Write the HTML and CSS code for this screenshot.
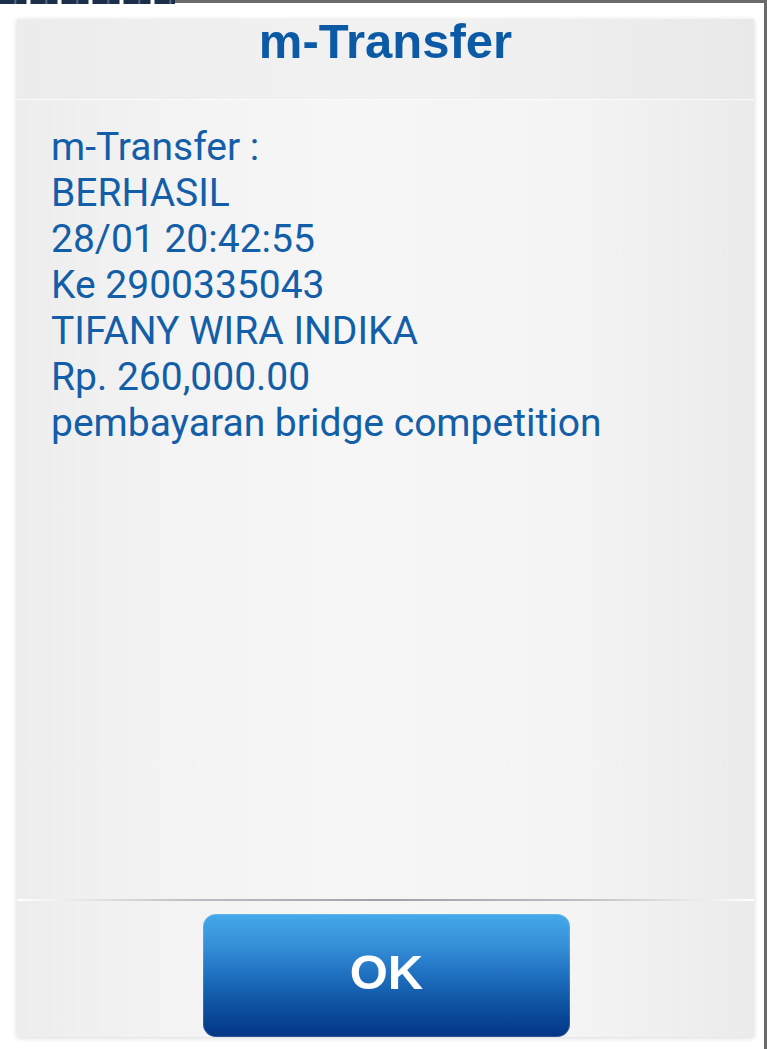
FILE: index.html
```html
<!DOCTYPE html>
<html lang="id">
<head>
<meta charset="utf-8">
<title>m-Transfer</title>
<link rel="stylesheet" href="styles.css">
</head>
<body>
<div class="screen">
  <div class="topstrip">
    <div class="topstrip-dark"></div>
    <div class="topstrip-bar"></div>
  </div>
  <div class="dialog">
    <div class="dialog-header">
      <h1 class="dialog-title">m-Transfer</h1>
    </div>
    <div class="dialog-body">
      <p class="line">m-Transfer :</p>
      <p class="line">BERHASIL</p>
      <p class="line">28/01 20:42:55</p>
      <p class="line">Ke 2900335043</p>
      <p class="line">TIFANY WIRA INDIKA</p>
      <p class="line">Rp. 260,000.00</p>
      <p class="line">pembayaran bridge competition</p>
    </div>
    <div class="dialog-divider"></div>
    <div class="dialog-footer">
      <button class="ok-button" type="button">OK</button>
    </div>
  </div>
</div>
</body>
</html>
```

FILE: styles.css
```css
html, body {
  margin: 0;
  padding: 0;
  background: #ffffff;
}

.screen {
  width: 764px;
  height: 1049px;
  border-right: 3px solid #6a6a6a;
  display: flex;
  flex-direction: column;
  overflow: hidden;
}

.topstrip {
  height: 4px;
  display: flex;
  flex: none;
  overflow: hidden;
}

.topstrip-dark {
  width: 175px;
  height: 4px;
  flex: none;
  background: repeating-linear-gradient(to right, #1b2e4a 0px, #1b2e4a 14px, #6c7a8e 15px, #1b2e4a 17px, #1b2e4a 26px, #ffffff 27px, #ffffff 30px, #1b2e4a 31px);
}

.topstrip-bar {
  flex: 1;
  height: 3px;
  background: #6a6a6a;
}

.dialog {
  margin: 15px 0 0 17px;
  width: 737px;
  height: 1018px;
  display: flex;
  flex-direction: column;
  background: linear-gradient(to right, #ededed 0%, #f3f3f3 20%, #f6f6f6 45%, #f4f4f4 75%, #ebebeb 100%);
  box-shadow: 0 1px 5px rgba(0, 0, 0, 0.16);
  flex: none;
}

.dialog-header {
  height: 81px;
  flex: none;
  border-bottom: 1px solid #fbfbfb;
  background: linear-gradient(to right, #ececec 0%, #f1f1f1 40%, #f1f1f1 60%, #e9e9e9 100%);
  box-sizing: border-box;
  padding-top: 2px;
}

.dialog-title {
  margin: 0;
  text-align: center;
  font-family: "Liberation Sans", Arial, sans-serif;
  font-weight: bold;
  font-size: 49px;
  line-height: 40px;
  color: #0c5aa6;
}

.dialog-body {
  flex: 1;
  padding: 24px 0 0 34px;
}

.line {
  margin: 0;
  font-family: Roboto, "Noto Sans", sans-serif;
  font-size: 39px;
  line-height: 46px;
  color: #135ea8;
  white-space: nowrap;
}

.dialog-divider {
  height: 2px;
  flex: none;
  background: linear-gradient(to right, #ffffff 0%, #b9bcc0 25%, #9ea2a7 50%, #b9bcc0 75%, #ffffff 100%);
}

.dialog-footer {
  height: 136px;
  flex: none;
  display: flex;
  justify-content: center;
  padding-top: 13px;
  box-sizing: border-box;
}

.ok-button {
  width: 367px;
  height: 123px;
  margin-left: 2px;
  border: none;
  border-radius: 13px;
  background: linear-gradient(to bottom, #45a9e9 0%, #3690d8 25%, #1e6fbf 50%, #0d51a0 75%, #023584 100%);
  box-shadow: inset 0 0 0 1px rgba(255, 255, 255, 0.15);
  color: #ffffff;
  font-family: "Liberation Sans", Arial, sans-serif;
  font-weight: bold;
  font-size: 49px;
  line-height: 1;
  padding: 0;
  padding-bottom: 6px;
}
```
